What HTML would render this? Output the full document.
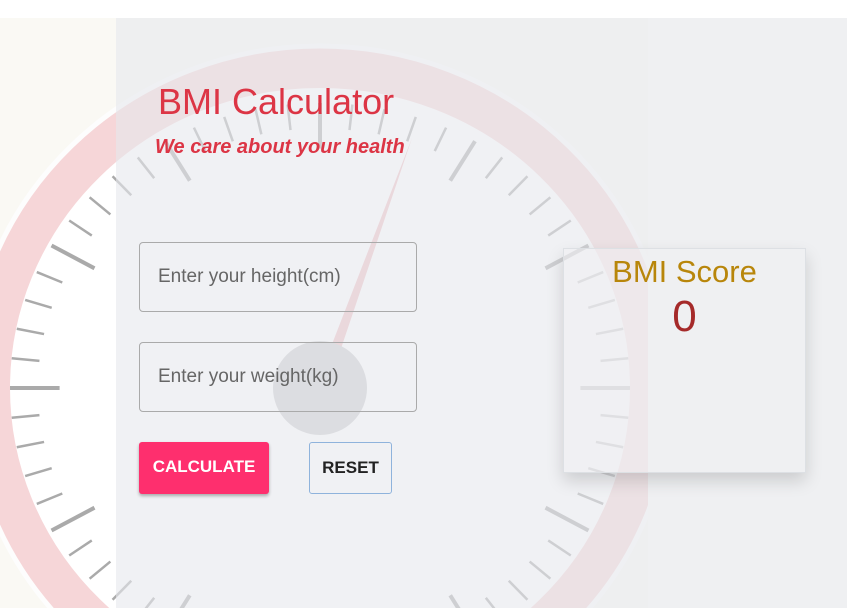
<!DOCTYPE html>
<html><head><meta charset="utf-8"><style>
html,body{margin:0;padding:0;width:847px;height:608px;overflow:hidden;background:#fff;font-family:"Liberation Sans",sans-serif;position:relative}
#bg{position:absolute;left:0;top:18px;width:847px;height:590px}
.ov{position:absolute;top:18px;height:590px}
h1{position:absolute;left:158px;top:81px;margin:0;font-weight:normal;font-size:36px;color:#dc3545;white-space:nowrap}
.sub{position:absolute;left:155px;top:136px;font-size:20px;font-style:italic;font-weight:bold;color:#dc3545;white-space:nowrap}
.inp{position:absolute;left:139px;width:278px;height:70px;border:1px solid #aaa;border-radius:4px;box-sizing:border-box;font-size:19px;color:#666;padding-left:18px;line-height:68px}
.btn{position:absolute;top:442px;height:52px;box-sizing:border-box;font-weight:bold;font-size:17px;text-align:center;line-height:50px;border-radius:3px}
.card{position:absolute;left:563px;top:248px;width:243px;height:225px;background:rgba(239,240,242,0.5);border:1px solid #dde0e4;box-sizing:border-box;box-shadow:0 8px 16px rgba(0,0,0,0.15);text-align:center}
</style></head><body>
<svg id="bg" width="847" height="590" viewBox="0 18 847 590" xmlns="http://www.w3.org/2000/svg">
<rect x="0" y="18" width="847" height="590" fill="#faf9f4"/>
<ellipse cx="320" cy="388" rx="335" ry="325" fill="#ffffff"/>
<g id="ticks" stroke="#aaaaaa"></g>
<ellipse cx="320" cy="388" rx="330" ry="320" fill="none" stroke="#f6d6d8" stroke-width="40"/>
<ellipse cx="320" cy="388" rx="352" ry="342" fill="none" stroke="#fdfdfd" stroke-width="5"/>
<polygon points="315,388 327,390 412,138" fill="#f0c0c3"/>
<circle cx="320" cy="388" r="47" fill="#cdcecf"/>
</svg>
<div class="ov" style="left:116px;width:532px;background:rgba(230,232,236,0.6)"></div>
<div class="ov" style="left:648px;width:199px;background:#eff0f2"></div>
<h1>BMI Calculator</h1>
<div class="sub">We care about your health</div>
<div class="inp" style="top:242px">Enter your height(cm)</div>
<div class="inp" style="top:342px">Enter your weight(kg)</div>
<div class="btn" style="left:139px;width:130px;background:#fe2f6e;color:#fff;box-shadow:0 2px 3px rgba(0,0,0,0.3)">CALCULATE</div>
<div class="btn" style="left:309px;width:83px;border:1px solid #8fb3dc;color:#222">RESET</div>
<div class="card">
<div style="font-size:31px;color:#b8860b;margin-top:5px">BMI Score</div>
<div style="font-size:44px;color:#a52a2a;margin-top:2px">0</div>
</div>
<script>
var g=document.getElementById('ticks'),s='';
for(var i=0;i<60;i++){var a=i*6*Math.PI/180,maj=i%5==0,k1=1,k0=maj?0.84:0.91,rx=310,ry=285;
s+='<line x1="'+(320+k0*rx*Math.cos(a))+'" y1="'+(388+k0*ry*Math.sin(a))+'" x2="'+(320+k1*rx*Math.cos(a))+'" y2="'+(388+k1*ry*Math.sin(a))+'" stroke-width="'+(maj?4:2.5)+'"/>';}
g.innerHTML=s;
</script>
</body></html>
